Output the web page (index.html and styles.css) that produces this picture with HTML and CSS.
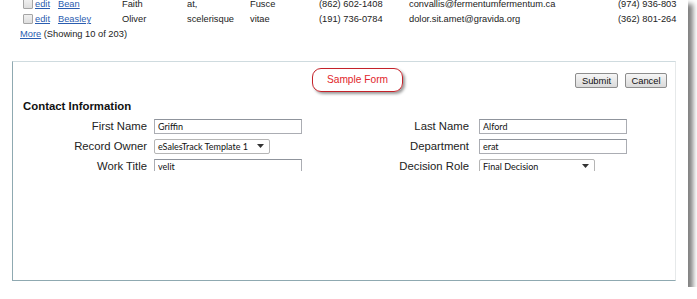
FILE: index.html
```html
<!DOCTYPE html>
<html>
<head>
    <link rel="stylesheet" href="styles.css">
</head>
<body>
    <div class="shot">
        <div class="list">
            <div class="row">
                <span class="check"></span>
                <a class="c-edit" href="#">edit</a>
                <a class="c-last" href="#">Bean</a>
                <span class="c-first">Faith</span>
                <span class="c-a">at,</span>
                <span class="c-b">Fusce</span>
                <span class="c-phone">(862) 602-1408</span>
                <span class="c-mail">convallis@fermentumfermentum.ca</span>
                <span class="c-phone2">(974) 936-803</span>
            </div>
            <div class="row">
                <span class="check"></span>
                <a class="c-edit" href="#">edit</a>
                <a class="c-last" href="#">Beasley</a>
                <span class="c-first">Oliver</span>
                <span class="c-a">scelerisque</span>
                <span class="c-b">vitae</span>
                <span class="c-phone">(191) 736-0784</span>
                <span class="c-mail">dolor.sit.amet@gravida.org</span>
                <span class="c-phone2">(362) 801-264</span>
            </div>
            <div class="more"><a href="#">More</a> (Showing 10 of 203)</div>
        </div>

        <div class="panel">
            <div class="panel-head">
                <span class="badge">Sample Form</span>
                <div class="actions">
                    <button type="button">Submit</button>
                    <button type="button">Cancel</button>
                </div>
            </div>
            <div class="panel-body">
                <h2>Contact Information</h2>
                <div class="fields">
                    <label>First Name</label>
                    <input type="text" value="Griffin">
                    <label>Last Name</label>
                    <input type="text" value="Alford">

                    <label>Record Owner</label>
                    <div class="select">eSalesTrack Template 1<svg width="7" height="4" viewBox="0 0 7 4"><path d="M0 0h7L3.5 4z" fill="#333"/></svg></div>
                    <label>Department</label>
                    <input type="text" value="erat">

                    <label>Work Title</label>
                    <input type="text" value="velit">
                    <label>Decision Role</label>
                    <div class="select">Final Decision<svg width="7" height="4" viewBox="0 0 7 4"><path d="M0 0h7L3.5 4z" fill="#333"/></svg></div>
                </div>
            </div>
        </div>
    </div>
</body>
</html>
```

FILE: styles.css
```css
body {
    margin: 0;
    background-color: #fff;
    font-family: "Liberation Sans", Arial, sans-serif;
}

.shot {
    width: 688px;
    height: 287px;
    background-color: #fff;
    box-shadow: 5px 4px 5px rgba(0, 0, 0, 0.5);
    overflow: hidden;
}

.list {
    margin-top: -4px;
    font-size: 9.3px;
    color: #222;
}

.row {
    display: flex;
    align-items: center;
    height: 15.5px;
    padding-left: 23px;
    white-space: nowrap;
}

.check {
    width: 8px;
    height: 8px;
    margin-right: 2px;
    border: 1px solid #a5a5a5;
    border-radius: 1px;
    background: linear-gradient(#f0f0f0, #dedede);
}

a {
    color: #2a5db0;
}

.c-edit { width: 23px; }
.c-last { width: 64px; }
.c-first { width: 65px; }
.c-a { width: 63px; }
.c-b { width: 69px; }
.c-phone { width: 90px; }
.c-mail { width: 209px; }

.more {
    height: 15px;
    line-height: 15px;
    padding-left: 20px;
}

.panel {
    box-sizing: border-box;
    width: 664px;
    height: 220px;
    margin: 19px 0 0 12px;
    border-top: 1px solid #cfdbdf;
    border-left: 1px solid #8fa9b1;
    border-bottom: 1px solid #8fa9b1;
    border-right: 1px solid #e6e9ea;
}

.panel-head {
    display: flex;
    align-items: center;
    padding: 6px 8px 0 0;
}

.badge {
    box-sizing: border-box;
    width: 91px;
    height: 24px;
    margin-left: 299px;
    border: 1.5px solid #c4222a;
    border-radius: 9px;
    box-shadow: 2px 2px 3px rgba(0, 0, 0, 0.4);
    color: #e1262b;
    font-size: 10.2px;
    line-height: 21px;
    text-align: center;
}

.actions {
    display: flex;
    gap: 7px;
    margin-left: auto;
}

.actions button {
    box-sizing: border-box;
    width: 43px;
    height: 15px;
    padding: 0;
    border: 1px solid #8d8d8d;
    border-radius: 2px;
    background: linear-gradient(#f6f6f6, #dadada);
    font-family: "Liberation Sans", Arial, sans-serif;
    font-size: 9.4px;
    color: #111;
}

.actions button + button {
    width: 42px;
}

.panel-body {
    height: 79px;
    overflow: hidden;
    padding-top: 7px;
    box-sizing: border-box;
}

h2 {
    margin: 0 0 3px 10px;
    font-size: 11.4px;
    line-height: 14px;
    color: #111;
}

.fields {
    display: grid;
    grid-template-columns: 141px 148px 177px 148px;
    grid-auto-rows: 20px;
    align-items: center;
}

.fields label {
    padding-right: 7px;
    text-align: right;
    font-size: 11.3px;
    color: #222;
}

.fields label:nth-of-type(even) {
    padding-right: 10px;
}

.fields input,
.select {
    box-sizing: border-box;
    height: 15px;
    margin: 0;
    padding: 0 3px;
    border: 1px solid #abadb3;
    border-top-color: #8f949c;
    font-family: Lato, "Open Sans", sans-serif;
    font-size: 9px;
    color: #111;
}

.fields input {
    width: 148px;
}

.select {
    display: flex;
    align-items: center;
    justify-content: space-between;
    width: 116px;
    padding-right: 5px;
    border-radius: 2px;
    border-color: #b5b5b5;
}
```
